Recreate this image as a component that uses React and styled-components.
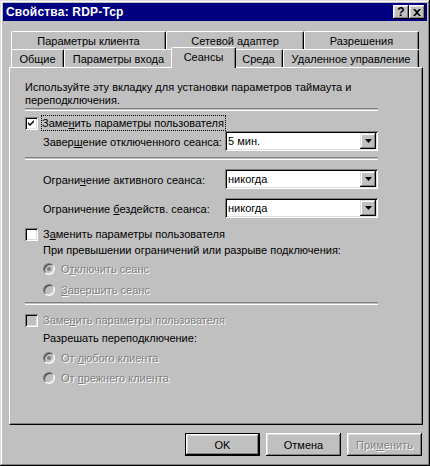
import styled, { createGlobalStyle } from "styled-components";

const GlobalStyle = createGlobalStyle`
  html, body {
    margin: 0;
    padding: 0;
    background: #c0c0c0;
  }
  body {
    font-family: "Liberation Sans", Arial, sans-serif;
    font-size: 11px;
    font-weight: 400;
    color: #000;
  }
`;

const tabsTop = [
    { label: "Параметры клиента", width: 155 },
    { label: "Сетевой адаптер", width: 138 },
    { label: "Разрешения", width: 115 },
];

const tabsBottom = [
    { label: "Общие", width: 53 },
    { label: "Параметры входа", width: 109 },
    { label: "Сеансы", width: 61, active: true },
    { label: "Среда", width: 49 },
    { label: "Удаленное управление", width: 136 },
];

const Check = ({ checked, disabled }) => (
    <CheckBox $disabled={disabled}>
        {checked && (
            <svg width="7" height="7" viewBox="0 0 7 7">
                <path d="M0 2 L2 4 L6 0 L6 2 L2 6 L0 4 Z" fill="#000" />
            </svg>
        )}
    </CheckBox>
);

const Radio = ({ checked }) => (
    <RadioCircle>
        {checked && <RadioDot />}
    </RadioCircle>
);

const Combo = ({ value }) => (
    <ComboBox>
        <ComboValue>{value}</ComboValue>
        <ComboButton>
            <svg width="7" height="4" viewBox="0 0 7 4">
                <path d="M0 0 H7 L3.5 4 Z" fill="#000" />
            </svg>
        </ComboButton>
    </ComboBox>
);

const App = () => {
    return (
        <>
            <GlobalStyle />
            <Window>
                <TitleBar>
                    <Title>Свойства: RDP-Tcp</Title>
                    <TitleButtons>
                        <TitleButton>?</TitleButton>
                        <TitleButton>
                            <svg width="8" height="7" viewBox="0 0 8 7">
                                <path d="M0 0 H2 L4 2 L6 0 H8 L5 3.5 L8 7 H6 L4 5 L2 7 H0 L3 3.5 Z" fill="#000" />
                            </svg>
                        </TitleButton>
                    </TitleButtons>
                </TitleBar>

                <Body>
                    <TabStrip>
                        <TabRow>
                            {tabsTop.map((tab) => (
                                <Tab key={tab.label} $width={tab.width}>{tab.label}</Tab>
                            ))}
                        </TabRow>
                        <TabRow>
                            {tabsBottom.map((tab) => (
                                <Tab key={tab.label} $width={tab.width} $active={tab.active}>{tab.label}</Tab>
                            ))}
                        </TabRow>
                    </TabStrip>

                    <Panel>
                        <Intro>
                            Используйте эту вкладку для установки параметров таймаута и
                            <br />
                            переподключения.
                        </Intro>
                        <Separator $top={1} />

                        <CheckRow $top={4}>
                            <Check checked />
                            <FocusLabel>Заме<Key>н</Key>ить параметры пользователя</FocusLabel>
                        </CheckRow>
                        <FieldRow>
                            <FieldLabel>Завер<Key>ш</Key>ение отключенного сеанса:</FieldLabel>
                            <Combo value="5 мин." />
                        </FieldRow>
                        <Separator $top={6} />

                        <FieldRow $top={9}>
                            <FieldLabel>Ограни<Key>ч</Key>ение активного сеанса:</FieldLabel>
                            <Combo value="никогда" />
                        </FieldRow>
                        <FieldRow $top={9}>
                            <FieldLabel>Ограничение <Key>б</Key>ездейств. сеанса:</FieldLabel>
                            <Combo value="никогда" />
                        </FieldRow>

                        <CheckRow $top={8}>
                            <Check />
                            <Label>З<Key>а</Key>менить параметры пользователя</Label>
                        </CheckRow>
                        <Note>При превышении ограничений или разрыве подключения:</Note>
                        <RadioRow $top={3}>
                            <Radio checked />
                            <Label $disabled>О<Key>т</Key>ключить сеанс</Label>
                        </RadioRow>
                        <RadioRow $top={5}>
                            <Radio />
                            <Label $disabled><Key>З</Key>авершить сеанс</Label>
                        </RadioRow>
                        <Separator $top={4} />

                        <CheckRow $top={7}>
                            <Check disabled />
                            <Label $disabled>Заме<Key>н</Key>ить параметры пользователя</Label>
                        </CheckRow>
                        <Note $top={2}>Разрешать переподключение:</Note>
                        <RadioRow $top={4}>
                            <Radio checked />
                            <Label $disabled>От <Key>л</Key>юбого клиента</Label>
                        </RadioRow>
                        <RadioRow $top={4}>
                            <Radio />
                            <Label $disabled>От <Key>п</Key>режнего клиента</Label>
                        </RadioRow>
                    </Panel>

                    <ButtonRow>
                        <Button $default>OK</Button>
                        <Button>Отмена</Button>
                        <Button $disabled>При<Key>м</Key>енить</Button>
                    </ButtonRow>
                </Body>
            </Window>
        </>
    );
};

const Window = styled.div`
    width: 430px;
    height: 466px;
    box-sizing: border-box;
    padding: 3px;
    background: #c0c0c0;
    box-shadow:
        inset -1px -1px #000,
        inset 1px 1px #dfdfdf,
        inset -2px -2px #808080,
        inset 2px 2px #fff;
`;

const TitleBar = styled.div`
    height: 18px;
    display: flex;
    align-items: center;
    justify-content: space-between;
    padding: 0 2px 0 3px;
    background: #000080;
`;

const Title = styled.div`
    color: #fff;
    font-weight: 700;
    font-size: 12px;
    letter-spacing: 0.2px;
`;

const TitleButtons = styled.div`
    display: flex;
`;

const TitleButton = styled.div`
    width: 16px;
    height: 14px;
    box-sizing: border-box;
    display: flex;
    align-items: center;
    justify-content: center;
    background: #c0c0c0;
    font-weight: 700;
    font-size: 12px;
    box-shadow:
        inset -1px -1px #000,
        inset 1px 1px #fff,
        inset -2px -2px #808080,
        inset 2px 2px #dfdfdf;
`;

const Body = styled.div`
    padding: 10px 1px 0 6px;
`;

const TabStrip = styled.div`
    padding-left: 2px;
`;

const TabRow = styled.div`
    display: flex;
    height: 18px;
`;

const Tab = styled.div`
    position: relative;
    width: ${(p) => p.$width + (p.$active ? 4 : 0)}px;
    height: ${(p) => (p.$active ? 21 : 18)}px;
    margin: ${(p) => (p.$active ? "-2px -2px -1px" : "0")};
    z-index: ${(p) => (p.$active ? 2 : 1)};
    box-sizing: border-box;
    display: flex;
    align-items: ${(p) => (p.$active ? "flex-start" : "center")};
    padding-top: ${(p) => (p.$active ? "3px" : "0")};
    justify-content: center;
    white-space: nowrap;
    background: #c0c0c0;
    border-top: 1px solid #fff;
    border-left: 1px solid #fff;
    border-right: 1px solid #000;
    border-radius: 2px 2px 0 0;
    box-shadow: inset -1px 0 #808080;
`;

const Panel = styled.div`
    position: relative;
    width: 414px;
    height: 358px;
    box-sizing: border-box;
    padding: 13px 44px 0 15px;
    border-top: 1px solid #fff;
    border-left: 1px solid #fff;
    border-right: 1px solid #000;
    border-bottom: 1px solid #000;
    box-shadow: inset -1px -1px #808080;
    display: flex;
    flex-direction: column;
`;

const Intro = styled.div`
    line-height: 13px;
`;

const Separator = styled.div`
    margin-top: ${(p) => p.$top || 0}px;
    height: 1px;
    border-top: 1px solid #808080;
    border-bottom: 1px solid #fff;
`;

const CheckRow = styled.div`
    display: flex;
    align-items: center;
    gap: 5px;
    height: 16px;
    margin-top: ${(p) => p.$top || 0}px;
`;

const CheckBox = styled.span`
    width: 13px;
    height: 13px;
    box-sizing: border-box;
    display: flex;
    align-items: center;
    justify-content: center;
    background: ${(p) => (p.$disabled ? "#c0c0c0" : "#fff")};
    box-shadow:
        inset 1px 1px #808080,
        inset -1px -1px #fff,
        inset 2px 2px #000,
        inset -2px -2px #dfdfdf;
`;

const Label = styled.span`
    white-space: nowrap;
    color: ${(p) => (p.$disabled ? "#808080" : "#000")};
    text-shadow: ${(p) => (p.$disabled ? "1px 1px #fff" : "none")};
`;

const FocusLabel = styled.span`
    white-space: nowrap;
    padding: 1px 1px 1px 0;
    border: 1px dotted #000;
    margin-left: -2px;
`;

const Key = styled.span`
    text-decoration: underline;
`;

const FieldRow = styled.div`
    display: flex;
    align-items: center;
    justify-content: space-between;
    height: 20px;
    padding-left: 18px;
    margin-top: ${(p) => p.$top || 0}px;
`;

const FieldLabel = styled.span`
    white-space: nowrap;
    padding-top: 2px;
`;

const ComboBox = styled.div`
    width: 153px;
    height: 20px;
    box-sizing: border-box;
    padding: 2px;
    display: flex;
    align-items: center;
    background: #fff;
    box-shadow:
        inset 1px 1px #808080,
        inset -1px -1px #fff,
        inset 2px 2px #000,
        inset -2px -2px #dfdfdf;
`;

const ComboValue = styled.span`
    flex: 1;
    padding-left: 1px;
`;

const ComboButton = styled.span`
    width: 16px;
    height: 16px;
    box-sizing: border-box;
    display: flex;
    align-items: center;
    justify-content: center;
    background: #c0c0c0;
    box-shadow:
        inset -1px -1px #000,
        inset 1px 1px #dfdfdf,
        inset -2px -2px #808080,
        inset 2px 2px #fff;
`;

const Note = styled.div`
    height: 16px;
    line-height: 16px;
    padding-left: 18px;
    white-space: nowrap;
    margin-top: ${(p) => p.$top || 0}px;
`;

const RadioRow = styled.div`
    display: flex;
    align-items: center;
    gap: 6px;
    height: 16px;
    padding-left: 18px;
    margin-top: ${(p) => p.$top || 0}px;
`;

const RadioCircle = styled.span`
    width: 12px;
    height: 12px;
    box-sizing: border-box;
    border-radius: 50%;
    display: flex;
    align-items: center;
    justify-content: center;
    background: #c0c0c0;
    border: 1px solid;
    border-color: #808080 #fff #fff #808080;
    box-shadow: inset 1px 1px #404040, inset -1px -1px #dfdfdf;
`;

const RadioDot = styled.span`
    width: 4px;
    height: 4px;
    border-radius: 50%;
    background: #808080;
`;

const ButtonRow = styled.div`
    display: flex;
    justify-content: flex-end;
    gap: 6px;
    margin-top: 8px;
    padding-right: 4px;
`;

const Button = styled.div`
    width: 75px;
    height: 23px;
    box-sizing: border-box;
    display: flex;
    align-items: center;
    justify-content: center;
    background: #c0c0c0;
    font-weight: 400;
    color: ${(p) => (p.$disabled ? "#808080" : "#000")};
    text-shadow: ${(p) => (p.$disabled ? "1px 1px #fff" : "none")};
    border: ${(p) => (p.$default ? "1px solid #000" : "none")};
    box-shadow:
        inset -1px -1px #000,
        inset 1px 1px #fff,
        inset -2px -2px #808080,
        inset 2px 2px #dfdfdf;
`;

export default App;
